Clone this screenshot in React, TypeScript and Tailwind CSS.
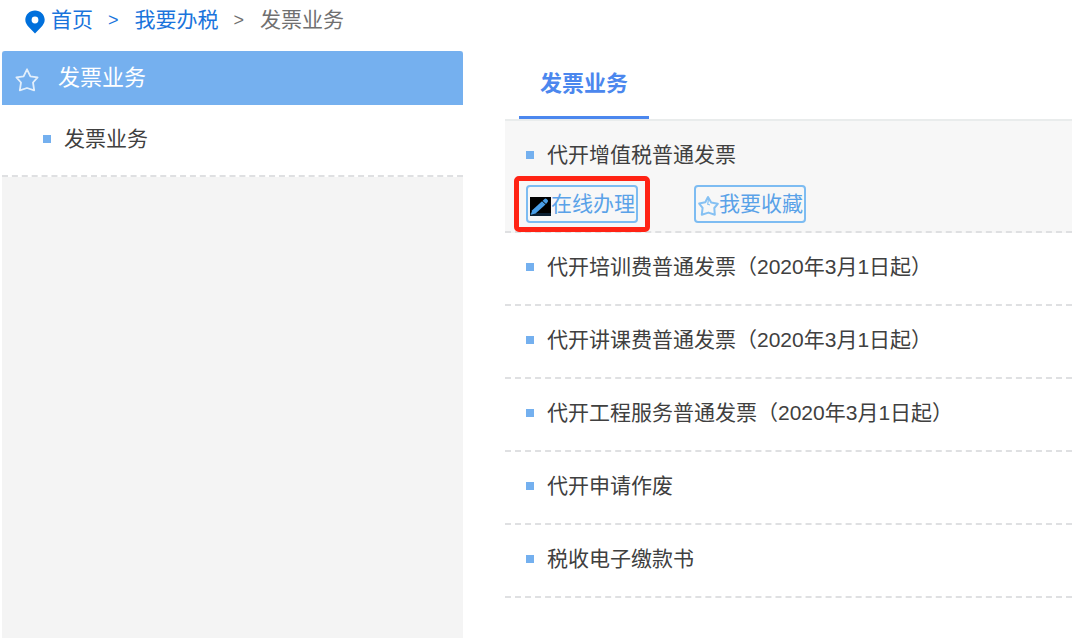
import React from "react";

const menuItems = ["发票业务"];

const services = [
  "代开增值税普通发票",
  "代开培训费普通发票（2020年3月1日起）",
  "代开讲课费普通发票（2020年3月1日起）",
  "代开工程服务普通发票（2020年3月1日起）",
  "代开申请作废",
  "税收电子缴款书",
];

const PinIcon = () => (
  <svg width="20" height="24" viewBox="0 0 20 24" aria-hidden="true">
    <path
      fill="#0070dc"
      fillRule="evenodd"
      d="M10 0.5C4.6 0.5 0.3 4.6 0.3 9.8c0 3 1.6 5.4 3.9 7.7L10 23.5l5.8-6c2.3-2.3 3.9-4.7 3.9-7.7C19.7 4.6 15.4 0.5 10 0.5zM10 6.6a3.4 3.4 0 1 1 0 6.8a3.4 3.4 0 0 1 0-6.8z"
    />
  </svg>
);

const StarIcon = () => (
  <svg
    width="24"
    height="24"
    viewBox="0 0 24 24"
    fill="none"
    stroke="currentColor"
    strokeWidth="1.8"
    strokeLinejoin="round"
    aria-hidden="true"
  >
    <path d="M12 1.3L8.6 8.3L1.4 9.3L6 14.5L4.8 22.3L12 20L19.2 22.3L18 14.5L22.6 9.3L15.4 8.3Z" />
  </svg>
);

const SmallStarIcon = () => (
  <svg
    width="21"
    height="20"
    viewBox="0 0 21 20"
    fill="none"
    stroke="#86c1f3"
    strokeWidth="2"
    strokeLinejoin="round"
    aria-hidden="true"
  >
    <path d="M10 1L7.3 6.3L1.2 7.6L4.6 11.8L3.8 18.7L10.4 16.6L16.8 18.7L16.3 12L19.8 7.8L13.2 6.5Z" />
    <path d="M10.5 3L9.7 8.3L12 9" strokeWidth="1.2" />
  </svg>
);

const PencilIcon = () => (
  <svg width="21" height="19" viewBox="0 0 21 19" aria-hidden="true">
    <rect width="21" height="19" fill="#000" />
    <rect y="16" width="21" height="3" fill="#0b2033" />
    <path d="M0.8 17.8L2.2 13.3L12 4.2L15.5 7.5L5.6 16.6Z" fill="#4a9fe8" />
    <path
      d="M12.6 3.7L14.8 1.8Q15.7 1.2 16.6 1.9L17.7 3Q18.4 4 17.7 4.9L16 6.900Z"
      fill="#4a9fe8"
    />
  </svg>
);

const Bullet = () => <span className="size-2 shrink-0 bg-[#74b0ef]" />;

const actionClass =
  "flex h-[38px] items-center rounded-[4px] border-2 border-[#7dbcf2] pr-px pl-[2px] text-[21px] leading-[30px] text-[#5aa2e8] cursor-pointer";

const App = () => {
  return (
    <div className="flex min-h-screen flex-col bg-white pr-2 pb-[5px] pl-[2px] font-['Liberation_Sans','Noto_Sans_CJK_SC',sans-serif] text-[21px] leading-[30px] text-[#404040]">
      {/* BREADCRUMB */}
      <nav className="flex h-[51px] items-start pt-[5px] pl-[23px]">
        <a href="#" className="flex items-center gap-[6px] text-[#1a74dc]">
          <span className="pt-1">
            <PinIcon />
          </span>
          首页
        </a>
        <span className="mr-4 ml-[15px] text-lg leading-[30px] text-[#1a74dc]">
          &gt;
        </span>
        <a href="#" className="text-[#1a74dc]">
          我要办税
        </a>
        <span className="mr-4 ml-[15px] text-lg leading-[30px] text-[#707070]">
          &gt;
        </span>
        <span className="text-[#707070]">发票业务</span>
      </nav>

      <div className="grid flex-1 grid-cols-[461fr_567fr] gap-[42px]">
        {/* SIDEBAR */}
        <aside className="bg-[#f4f4f4]">
          <h2 className="flex h-[54px] items-center gap-[19px] rounded-t-[3px] bg-[#75b0ef] pl-[13px] text-[22px] text-white">
            <span className="pt-1 opacity-80">
              <StarIcon />
            </span>
            发票业务
          </h2>
          <ul>
            {menuItems.map((item) => (
              <li
                key={item}
                className="border-b-2 border-dashed border-[#dfe0e2] bg-white pt-[19px] pb-[21px] pl-[41px]"
              >
                <a href="#" className="flex items-center gap-[13px]">
                  <Bullet />
                  {item}
                </a>
              </li>
            ))}
          </ul>
        </aside>

        {/* SERVICE LIST */}
        <main>
          <div className="flex h-[70px] border-b-2 border-[#e9ecec] pl-[14px]">
            <button
              type="button"
              className="h-[68px] cursor-pointer border-b-[3px] border-[#4b87ee] px-[21px] text-[22px] font-bold text-[#4b87ee]"
            >
              发票业务
            </button>
          </div>

          <ul>
            {services.map((service, i) => (
              <li
                key={service}
                className={
                  i === 0
                    ? "border-b-2 border-dashed border-[#dfe0e2] bg-[#f7f7f7] pt-[19px] pb-2 pl-[21px]"
                    : "border-b-2 border-dashed border-[#dfe0e2] pt-[19px] pb-[22px] pl-[21px]"
                }
              >
                <a href="#" className="flex items-center gap-[13px]">
                  <Bullet />
                  {service}
                </a>
                {i === 0 && (
                  <div className="mt-[15px] flex gap-14">
                    <div className="relative">
                      <button type="button" className={actionClass}>
                        <span className="pt-1">
                          <PencilIcon />
                        </span>
                        在线办理
                      </button>
                      <span className="pointer-events-none absolute -inset-x-3 -inset-y-[9px] rounded-[5px] border-[5px] border-[#ff2314]" />
                    </div>
                    <button type="button" className={actionClass}>
                      <span className="pt-1">
                        <SmallStarIcon />
                      </span>
                      我要收藏
                    </button>
                  </div>
                )}
              </li>
            ))}
          </ul>
        </main>
      </div>
    </div>
  );
};

export default App;
